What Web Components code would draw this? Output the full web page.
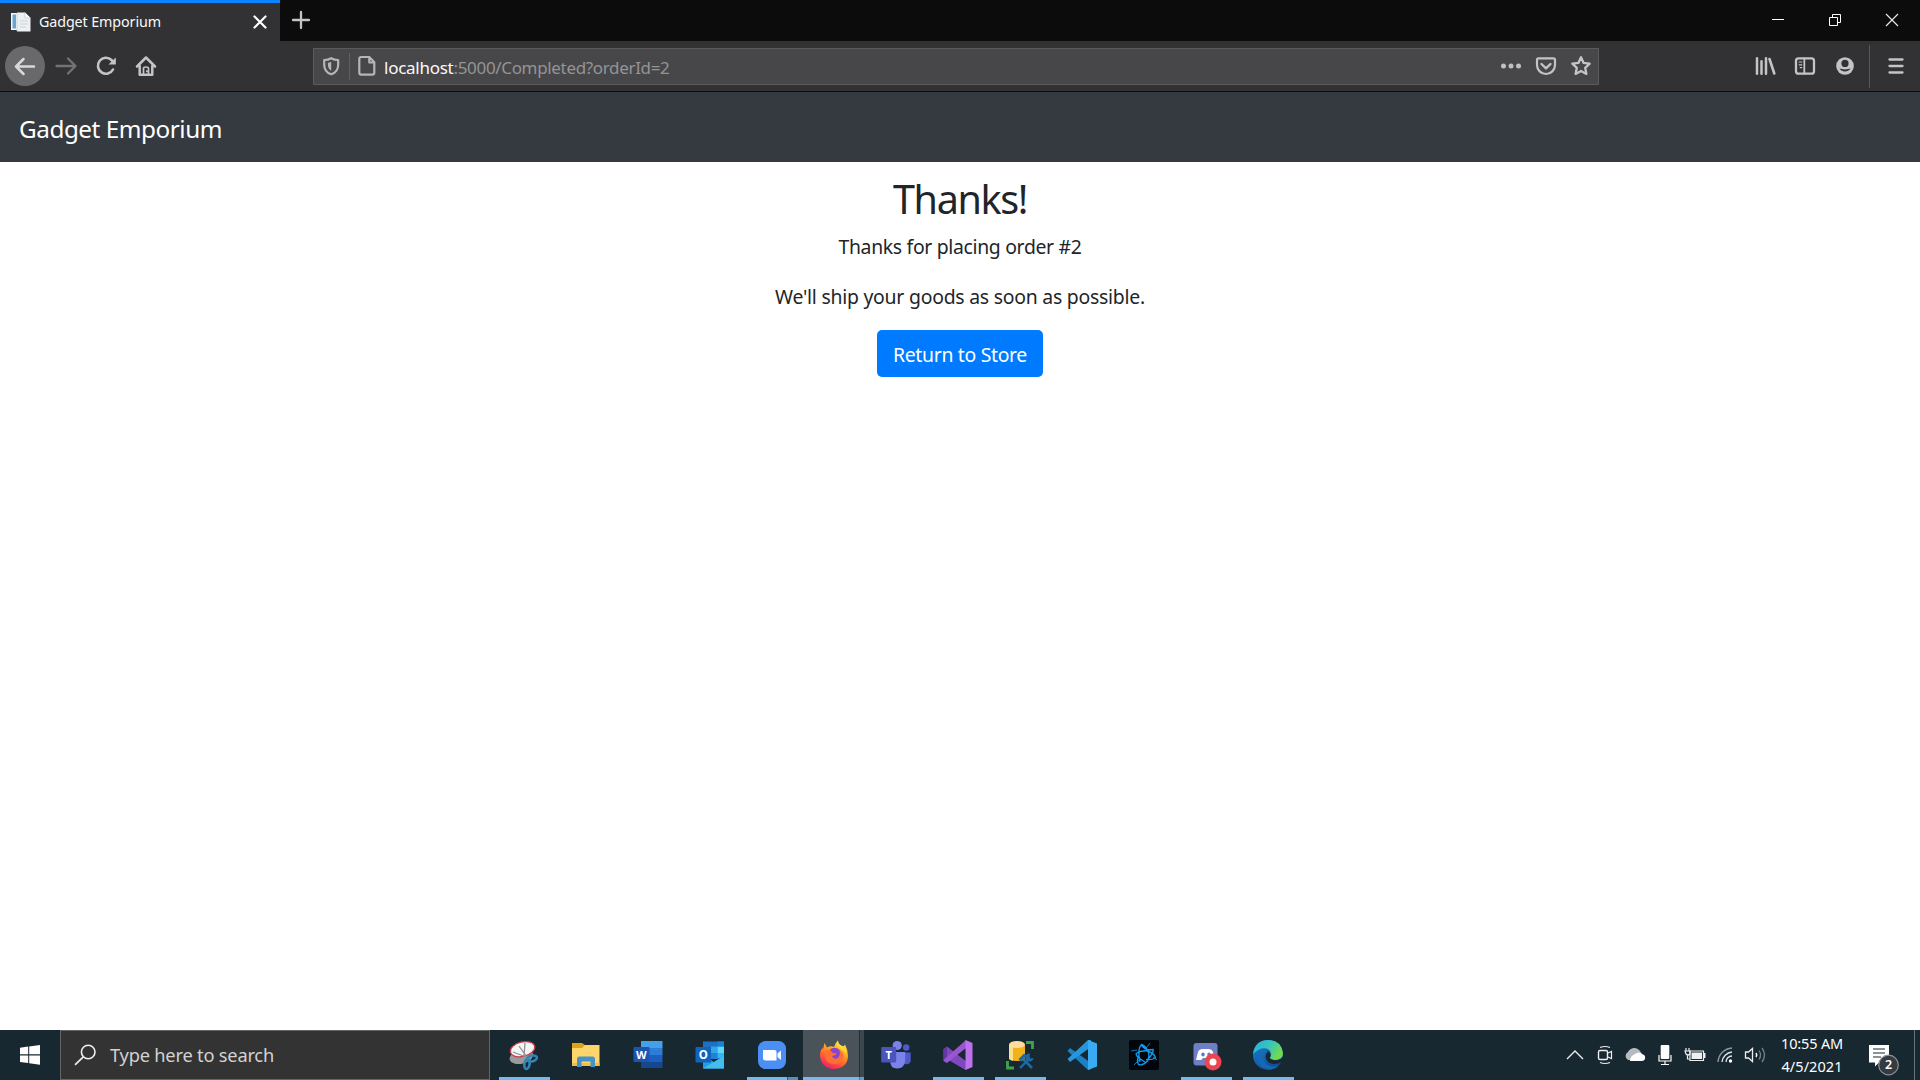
<!DOCTYPE html>
<html lang="en">
<head>
<meta charset="utf-8">
<title>Gadget Emporium</title>
<style>
html,body{margin:0;height:100%;overflow:hidden;background:#fff}
body{font-family:"Noto Sans","Open Sans",sans-serif}
</style>
</head>
<body>
<desktop-screen></desktop-screen>
<script>
const define = (name, css, html) => customElements.define(name, class extends HTMLElement {
  constructor() {
    super();
    this.attachShadow({mode: 'open'}).innerHTML = `<style>*{box-sizing:border-box}${css}</style>${html}`;
  }
});

/* Text run whose tracking is adjusted so that it spans the width in "w". */
customElements.define('fit-text', class extends HTMLElement {
  constructor() {
    super();
    this.attachShadow({mode: 'open'}).innerHTML =
      '<style>:host{display:inline-block;white-space:nowrap;flex:none}span{display:inline-block;white-space:pre}</style><span><slot></slot></span>';
  }
  connectedCallback() {
    const span = this.shadowRoot.querySelector('span');
    const slot = this.shadowRoot.querySelector('slot');
    const fit = () => {
      const w = +this.getAttribute('w');
      const n = slot.assignedNodes({flatten: true}).map(t => t.textContent).join('').length;
      if (!w || !n) return;
      span.style.letterSpacing = '0px';
      const natural = span.getBoundingClientRect().width;
      if (natural) span.style.letterSpacing = ((w - natural) / n) + 'px';
    };
    fit();
    slot.addEventListener('slotchange', fit);
    requestAnimationFrame(fit);
  }
});

/* Icons are drawn round the origin, one unit to the pixel. */
const line = (w, c = '#c4c4c5') => `fill="none" stroke="${c}" stroke-width="${w}" stroke-linecap="round" stroke-linejoin="round"`;
const ICONS = {
  favicon: `<path d="M-10-9H-1V8H-10Z" fill="#f4f8fb"/><path d="M-8.500-7.500H-5V6.500H-8.500Z" fill="#6aa5cf"/><path d="M-4-9.500H4L9.500-4V9.500H-4Z" fill="#edf1f4"/><path d="M4-9.500V-4H9.500" fill="#fff" stroke="#bcc5cb" stroke-width=".7"/><path d="M-4-9V9M-1-1H7M-1 2H7M-1 5H5" stroke="#c5ced4" stroke-width=".8"/>`,
  tabclose: `<path d="M-5.500-5.500L5.500 5.500M5.500-5.500L-5.500 5.500" ${line(2.2, '#fff')}/>`,
  plus: `<path d="M-8 0H8M0-8V8" ${line(2.3)}/>`,
  min: `<path d="M-6-.5H6" stroke="#fff"/>`,
  restore: `<path d="M-5.500-2.500H2.500V5.500H-5.500ZM-2.500-2.500V-5.500H5.500V2.500H2.500" fill="none" stroke="#fff"/>`,
  close: `<path d="M-6-6L6 6M6-6L-6 6" fill="none" stroke="#e8e8e8" stroke-width="1.2"/>`,
  back: `<circle r="20" fill="#69696b"/><path d="M9 .5H-8.500M-1.500-7L-9 .5L-1.500 8" ${line(2.5, '#d8d8d9')}/>`,
  forward: `<path d="M-9.500 0H9M2-7.500L9.500 0L2 7.500" ${line(2.3, '#737374')}/>`,
  reload: `<path d="M7 3.500A8 8 0 1 1 5.500-6L7-4" ${line(2.6)}/><path d="M9.800-8.500V-1.500H2.500Z" fill="#c4c4c5"/>`,
  home: `<path d="M-9 .5L0-8.500L9 .5M-6.300 0V8.800H6.300V0" ${line(2.5)}/><path d="M-2.500 8V2.500Q-2.500 1 0 1T2.500 2.500V8M.8 5V5.500" ${line(1.7)}/>`,
  shield: `<g transform="translate(-.8 0)"><path d="M0-7.800C-2.500-6.300-4.800-6-7-6V-1.500C-7 3.800-4 7 0 8.300C4 7 7 3.800 7-1.500V-6C4.800-6 2.500-6.300 0-7.800Z" ${line(2.2, '#b5b5b6')}/><path d="M0-4.200C-1.500-3.400-2.500-3.200-3.300-3.100V-1.500C-3.300 2-1.800 3.800 0 4.700Z" fill="#b5b5b6"/></g>`,
  page: `<path transform="translate(.8 0)" d="M-5.500-9H2.500L7.500-3.800V6.500Q7.500 8.700 5.500 8.700H-5.500Q-7.500 8.700-7.500 6.500V-7Q-7.500-9-5.500-9ZM2.500-8.500V-3.500H7" ${line(2.2, '#b5b5b6')}/>`,
  dots: `<g fill="#c0c0c1"><circle cx="-7.500" r="2.500"/><circle r="2.500"/><circle cx="7.500" r="2.500"/></g>`,
  pocket: `<path d="M-7.500-7.700H7.500Q9-7.700 9-6.200V-1A9 9 0 0 1-9-1V-6.200Q-9-7.700-7.500-7.700Z" ${line(2.2)}/><path d="M-4.500-2L0 2.300L4.500-2" ${line(2.4)}/>`,
  star: `<path d="M0-8.700L2.600-3.100L8.700-2.400L4.200 1.800L5.400 7.900L0 4.900L-5.400 7.900L-4.200 1.800L-8.700-2.400L-2.600-3.100Z" ${line(2.3)}/>`,
  library: `<path d="M-8-7.800V7.800M-3.500-4.800V7.800M1-7.800V7.800" ${line(2.5)} /><path d="M4.500-7L9.300 7.500" ${line(2.6)}/>`,
  sidebar: `<rect x="-9" y="-7.700" width="18" height="15.400" rx="2.500" ${line(2.3)}/><path d="M-.7-7.500V7.500" ${line(1.8)}/><path d="M-5.800-4H-3.200M-5.800-1.200H-3.200M-4.800 1.600H-3.200" ${line(1.2)}/>`,
  account: `<circle r="8.800" fill="#c4c4c5"/><circle cy="-2.600" r="3.600" fill="#323234"/><path d="M-5.500 2.300C-3.700 3.800 3.700 3.800 5.500 2.300C4 6.500-4 6.500-5.500 2.300Z" fill="#323234"/>`,
  menu: `<path d="M-6.500-6.500H6.500M-6.500 0H6.500M-6.500 6.500H6.500" ${line(2.3)}/>`,
  start: `<path d="M-10-7.200L-1.800-8.400V-.7H-10ZM-.8-8.500L10-10V-.7H-.8ZM-10 .4H-1.800V8.100L-10 6.900ZM-.8 .4H10V9.700L-.8 8.200Z" fill="#fff"/>`,
  search: `<circle cx="3.200" cy="-3" r="6.800" fill="none" stroke="#eee" stroke-width="1.600"/><path d="M-1.700 1.900L-10 9.800" stroke="#eee" stroke-width="1.700"/>`,
  snip: `<g transform="rotate(-14)"><ellipse cx="-3" cy="1" rx="12" ry="7" fill="#9a9a9d"/><ellipse cx="0" cy="-6" rx="12.500" ry="7.200" fill="#f5f5f5" stroke="#c73a49" stroke-width="1.300"/></g><path d="M-5-9L2 1M1-12L0 1M-11-3L2 2" stroke="#8c9094" stroke-width="1.300"/><g fill="none" stroke="#3286b5" stroke-width="2.600"><ellipse cx="8" cy="3.500" rx="5" ry="2.800" transform="rotate(-15 8 3.500)"/><ellipse cx="3" cy="9" rx="2.600" ry="5" transform="rotate(10 3 9)"/></g>`,
  folder: `<path d="M-14-12H-4L-1-10V-4H-14Z" fill="#dba318"/><path d="M-14-7H-4L-1-10H13.500V11H-14Z" fill="#fed56b"/><path d="M-14 8H13.500V11H-14Z" fill="#f5bd45"/><path d="M-9 12V4Q-9 1.500-6.500 1.500H6.500Q9 1.500 9 4V12H4.500V6.500H-4.500V12Z" fill="#4793c8"/>`,
  word: `<path d="M-7-14H14.500V-7H-7Z" fill="#459fe9"/><path d="M-7-7H14.500V0H-7Z" fill="#2d7dd8"/><path d="M-7 0H14.500V7H-7Z" fill="#1d5fbd"/><path d="M-7 7H14.500V13H-7Z" fill="#174791"/><rect x="-14.500" y="-8" width="16" height="15" rx="1" fill="#1c54b2"/><text x="-6.700" y="3.700" fill="#fff" font-size="11" font-weight="700" text-anchor="middle">W</text>`,
  outlook: `<path d="M-7-13.500H14V4H-7Z" fill="#1d70c4"/><path d="M1-8.500H7.500V-2H1Z" fill="#31a5e8"/><path d="M7.500-8.500H14V-2H7.500Z" fill="#60d6fa"/><path d="M7.500-13.500H14V-8.500H7.500Z" fill="#1684d8"/><path d="M1-2H7.500V4H1Z" fill="#1d83d2"/><path d="M7.500-2H14V3H7.500Z" fill="#34b5ee"/><path d="M-7 0L4 7L14 1V13.500H-7Z" fill="#289ce2"/><path d="M-7 13.500L14 1V13.500Z" fill="#43bdee"/><rect x="-14.500" y="-8" width="15.500" height="15.500" rx="1" fill="#0f65bd"/><text x="-6.800" y="3.800" fill="#fff" font-size="11.500" font-weight="700" text-anchor="middle">O</text>`,
  zoom: `<rect x="-14" y="-14" width="28" height="28" rx="7.500" fill="#4b8ff4"/><path d="M-9-5H2.500Q4.500-5 4.500-3V5.500H-6.500Q-9 5.500-9 3Z" fill="#fff"/><path d="M5.500-1.500L9-4.500V5L5.500 2Z" fill="#fff"/>`,
  firefox: `<defs><linearGradient id="ff" x1=".8" y1="0" x2=".3" y2="1"><stop offset="0" stop-color="#fff04b"/><stop offset=".35" stop-color="#ffac24"/><stop offset=".65" stop-color="#ff642e"/><stop offset="1" stop-color="#f01873"/></linearGradient></defs><path d="M-9.500-12L-7-7.500Q-3-9.500 0-8Q1-12 4-14.500Q4-11 8-9Q10-8 11-10.500Q14-5 14 1C14 9 8 14 0 14S-14.500 8-14-1Q-13.800-4-11.500-7.500L-11-5.500Z" fill="url(#ff)"/><circle cx=".5" cy="-.5" r="6.800" fill="#8b45cc"/><path d="M-9-4Q-6-5.500-3.500-5Q-3-3-1-2L3-1.500Q1 .5-2 1Q-1 4.500 3 3.500Q7 1 5.500-5Q10-3 9 2Q8 9 0 9T-9 1Z" fill="#ff7030"/><path d="M4-14.500Q4-11 8-9Q12-7 12.500-1Q10-6 5-7Q1-9 4-14.500Z" fill="#ffd83d"/>`,
  teams: `<g transform="translate(-.8 0)"><circle cx="11" cy="-7.500" r="3.200" fill="#5059c9"/><circle cx="2" cy="-9.500" r="4.600" fill="#7b83eb"/><path d="M8-2.500H15.500V6Q14.500 10 9 9Z" fill="#5059c9"/><path d="M-5-3H10V6Q9 13.500 2 13.500T-5 6Z" fill="#7b83eb"/><rect x="-14" y="-8" width="15" height="15.500" rx="1" fill="#4b53bc"/><text x="-6.500" y="4" fill="#fff" font-size="11" font-weight="700" text-anchor="middle">T</text></g>`,
  vs: `<path d="M-14.500-6L-11-8.500L9 7V13.500L7.500 15L-12 3.500V3L-14.500 5Z" fill="#7f48bd"/><path d="M-14.500-6L-11-8V7.500L-14.500 5Z" fill="#6338a0"/><path d="M-14.500 5V6L-11 8L8-7V-15Z" fill="#9a55d5"/><path d="M7.500-15L14.500-12V12L7.500 15Z" fill="#bd72eb"/>`,
  db: `<path d="M6-12.500H12.500V-6M-12.500 6V13H-6" fill="none" stroke="#3fa34b" stroke-width="2.800"/><path d="M-11-10V3Q-11 6-3 6T5 3V-10Z" fill="#f3b21c"/><path d="M-11-10V3Q-11 5-7 5.700V-9Z" fill="#fde08a"/><ellipse cx="-3" cy="-10.500" rx="8" ry="3.500" fill="#ffdca0"/><path d="M3.500 4.500L12 13" stroke="#1c69a8" stroke-width="2.600"/><path d="M-1.500 4L4-1.500L7 .5L2.500 5L1.500 7Z" fill="#1c69a8"/><path d="M0 13L9 4" stroke="#1c69a8" stroke-width="2.400"/><path d="M10-1.500A4 4 0 1 0 13.500 3L10.500 3.500L9.500 1.800Z" fill="#1c69a8"/>`,
  vscode: `<path d="M-14.500-4L-12-7L9 8V14L6 15Z" fill="#1c80c4"/><path d="M-14.500 4L-12 7L9-8V-15H6Z" fill="#2796dc"/><path d="M6-15L15-11.500V11.500L6 15Z" fill="#38abf2"/>`,
  bnet: `<rect x="-15" y="-15" width="30" height="30" rx="2" fill="#020509"/><g fill="none" stroke="#1499e8" stroke-width="1.400"><path d="M-4 7Q-7-6-2.500-10.500Q2-9 4-3M-8-1.500Q-3-5 4-4Q11-1 11.500 3Q8 5 2 4.500M4-4Q6 1 3.500 6Q-1 11-5.500 9.500Q-7.500 6-5.500 1M-8-1.500Q-8 2 1 7M-2.500-10.500Q0-4 9-5.500Q10-3 5 3"/><path d="M-13-4L-7-5M9 2L13 5M-10 10L-4 4M6-12L2-7" stroke-width=".8"/></g>`,
  discord: `<g transform="translate(2 0)"><rect x="-14.500" y="-12" width="24" height="22.500" rx="3" fill="#6f7fc4"/><path d="M-10-3Q-9-6-5-6H0Q4-6 5-3L7 5H2L0 3H-5L-7 5H-12Z" fill="#fff"/><g fill="#6573b9"><ellipse cx="-5" cy="-.5" rx="1.700" ry="2"/><ellipse cx="1" cy="-.5" rx="1.700" ry="2"/></g><circle cx="5" cy="7" r="8.500" fill="#ec4550"/><circle cx="5" cy="7" r="3.500" fill="#fff"/></g>`,
  edge: `<defs><linearGradient id="eg" x2="1" y2=".5"><stop stop-color="#27aee5"/><stop offset=".55" stop-color="#38c5ba"/><stop offset="1" stop-color="#72db4c"/></linearGradient><linearGradient id="eb" y2="1" x2=".6"><stop stop-color="#1685d8"/><stop offset="1" stop-color="#104b96"/></linearGradient></defs><circle r="15" fill="url(#eb)"/><path d="M-15-1Q-13-15 0-15Q13-15 15-2Q15 5 7 5Q3 5 2 3Q5-3 0-6Q-7-9-15-1Z" fill="url(#eg)"/><path d="M-3-3C-8 7 1 15 11 10C7 16-4 16-9 9S-9-5-3-3Z" fill="#1769b3"/><path d="M0-4Q-5 2 0 7Q5 11 14 7Q17 3 14.800 2Q12 6 6 5Q1 4 2 2Q4-1 0-4Z" fill="#182831"/>`,
  chevron: `<path d="M-8 4L0-4L8 4" fill="none" stroke="#eee" stroke-width="1.400"/>`,
  camera: `<rect x="-6.500" y="-4.500" width="9" height="9" rx="1.500" fill="none" stroke="#eee" stroke-width="1.400"/><path d="M3-2L6.500-3.500V3.500L3 2M-5-7.500Q0-9.500 5-7.500M-5 7.500Q0 9.500 5 7.500" fill="none" stroke="#eee" stroke-width="1.200"/>`,
  cloud: `<path d="M-7 5A4.500 4.500 0 0 1-7-3A7 7 0 0 1 5-4L7-1L0 5Z" fill="#b5bbbe"/><path d="M-5 6Q-5 1 0-1Q4-4 7-1Q11 0 10 4Q9 6 7 6Z" fill="#fff"/>`,
  mic: `<rect x="-4.300" y="-10" width="8.600" height="14" rx="1" fill="#fff"/><path d="M-6 0V6H6V0M0 6V9M-4 9.500H4" fill="none" stroke="#fff" stroke-width="1.200"/>`,
  battery: `<path d="M-5-4H8.500V5.500H-5Z" fill="none" stroke="#eee" stroke-width="1.200"/><path d="M-3.500-2.500H7V4H-3.500ZM9-2H10.500V3H9Z" fill="#eee"/><path d="M-9-7V-4M-6-7V-4M-10-4H-5V-1Q-7 1-9-1ZM-7.500 0V4H-5" fill="none" stroke="#eee" stroke-width="1.200"/>`,
  wifi: `<g fill="none" stroke="#dfe3e5" stroke-width="1.400"><path d="M-7 7A15 15 0 0 1 7-7" stroke="#8d989e"/><path d="M-3 7A11 11 0 0 1 7-3M1 7A6 6 0 0 1 7 1"/></g><circle cx="5.500" cy="6" r="1.700" fill="#fff"/>`,
  volume: `<path d="M-9.500-3H-6.500L-2.500-6.500V6.500L-6.500 3H-9.500Z" fill="none" stroke="#eee" stroke-width="1.300"/><path d="M1-2Q2.500 0 1 2" fill="none" stroke="#fff" stroke-width="1.500"/><path d="M4-4.500Q7 0 4 4.500M7-7Q12 0 7 7" fill="none" stroke="#73838b" stroke-width="1.300"/>`,
  note: `<g transform="translate(1 0)"><path d="M-15-10H5V7.500H-5L-9 11.500V7.500H-15Z" fill="#fff"/><path d="M-11-6H1M-11-2H1M-11 2H-3" stroke="#182831" stroke-width="1.200"/><circle cx="4.500" cy="10" r="9.800" fill="#353b3f" stroke="#8d9498" stroke-width="1.200"/><text x="4.500" y="14.300" fill="#fff" font-size="12.500" font-weight="600" text-anchor="middle">2</text></g>`
};

customElements.define('ui-icon', class extends HTMLElement {
  constructor() { super(); this.attachShadow({mode: 'open'}); }
  connectedCallback() {
    this.shadowRoot.innerHTML = `<style>:host{display:flex;align-items:center;justify-content:center;flex:none;width:40px;height:40px}svg{display:block;overflow:visible;flex:none;font-family:"Noto Sans",sans-serif}</style>
      <svg width="40" height="40" viewBox="-20 -20 40 40" aria-hidden="true">${ICONS[this.getAttribute('name')] || ''}</svg>`;
  }
});

define('browser-tab', `
  :host{display:flex;align-items:center;width:280px;height:41px;background:#323234;border-top:3px solid #0a84ff;color:#f9f9fa;font-size:14.3px;line-height:38px}
  .fav{width:20px;margin:0 8px 0 11px}
  .x{width:20px;margin-left:auto;margin-right:10.500px;height:38px}
  fit-text{height:37px;line-height:37px;align-self:flex-start}`,
  `<ui-icon class="fav" name="favicon"></ui-icon><fit-text w="122"><slot></slot></fit-text><ui-icon class="x" name="tabclose"></ui-icon>`);

define('tab-strip', `
  :host{display:flex;height:41px;background:#0c0c0d;align-items:flex-start}
  .new{width:42px}
  .controls{display:flex;margin-left:auto;height:40px}
  .controls ui-icon{width:57px}
  .controls ui-icon:last-child{width:57px}`,
  `<browser-tab>Gadget Emporium</browser-tab><ui-icon class="new" name="plus"></ui-icon>
   <div class="controls"><ui-icon name="min"></ui-icon><ui-icon name="restore"></ui-icon><ui-icon name="close"></ui-icon></div>`);

define('address-bar', `
  :host{display:flex;align-items:center;width:1286px;height:37px;background:#474749;border:1px solid #5a5a5c;font-size:17px;color:#949495;flex:none}
  ui-icon{width:35px;height:35px}
  .page{width:32px;margin-right:2px}
  i{width:1px;height:27px;background:#606062}
  .url{display:flex;line-height:35px;padding-top:2px;margin-right:auto}
  .host{color:#f9f9fa}`,
  `<ui-icon name="shield"></ui-icon><i></i><ui-icon class="page" name="page"></ui-icon>
   <div class="url"><fit-text class="host" w="69.5">localhost</fit-text><fit-text w="216">:5000/Completed?orderId=2</fit-text></div>
   <ui-icon name="dots"></ui-icon><ui-icon name="pocket"></ui-icon><ui-icon name="star"></ui-icon>`);

define('browser-toolbar', `
  :host{display:flex;align-items:center;height:51px;background:#323234;border-bottom:1px solid #0c0c0d;padding:0 4px 0 5px}
  .fwd{margin-left:1px}
  address-bar{margin-left:147px}
  .lib{margin-left:auto}
  i{width:1px;height:43px;background:#58585a;margin:0 6px 0 4px}`,
  `<ui-icon name="back"></ui-icon><ui-icon class="fwd" name="forward"></ui-icon><ui-icon name="reload"></ui-icon><ui-icon name="home"></ui-icon>
   <address-bar></address-bar>
   <ui-icon class="lib" name="library"></ui-icon><ui-icon name="sidebar"></ui-icon><ui-icon name="account"></ui-icon><i></i><ui-icon name="menu"></ui-icon>`);

define('store-navbar', `
  :host{display:flex;align-items:center;height:70px;padding:3px 0 0 19px;background:#343a40;color:#fff;font-size:24.300px;line-height:38px}`,
  `<fit-text w="203"><slot></slot></fit-text>`);

define('store-button', `
  :host{display:flex;align-items:center;justify-content:center;width:166px;height:47px;border-radius:5px;background:#007bff;color:#fff;font-size:19.400px;line-height:30px;padding-top:3px}`,
  `<fit-text w="134"><slot></slot></fit-text>`);

define('order-completed', `
  :host{display:flex;flex-direction:column;align-items:center;flex:1;background:#fff;color:#212529;padding-top:13px;font-size:19.400px;line-height:30px}
  h1,p{margin:0;font-weight:400}
  h1{height:48px;font-size:39.500px;line-height:48px;margin-bottom:9px}
  p{height:30px;margin-bottom:20px}
  p+p{margin-bottom:18px}
  fit-text{display:block}`,
  `<h1><fit-text w="134">Thanks!</fit-text></h1>
   <p><fit-text w="243">Thanks for placing order #2</fit-text></p>
   <p><fit-text w="370">We'll ship your goods as soon as possible.</fit-text></p>
   <store-button>Return to Store</store-button>`);

define('task-item', `
  :host{display:flex;flex-direction:column;align-items:center;width:62px;height:50px;flex:none}
  .bar{width:51px;height:3px;display:flex}
  :host([running]) .bar{background:#76b9ed}
  :host([stacked]) .bar{background:linear-gradient(90deg,#76b9ed 40px,#37566c 40px,#37566c 41px,#5790b9 41px)}
  :host([active]){background:linear-gradient(90deg,#4a5359 56px,#232e35 56px,#232e35 57px,#3c484f 57px);width:61px;margin-right:1px}
  :host([active]) .bar{width:61px;background:linear-gradient(90deg,#76b9ed 56px,#4c7999 56px,#4c7999 57px,#659fc9 57px)}`,
  `<slot></slot><div class="bar"></div>`);
/* A task item takes its icon by name. */
customElements.define('task-app', class extends HTMLElement {
  constructor() { super(); this.attachShadow({mode: 'open'}); }
  connectedCallback() {
    const s = this.getAttribute('state') || '';
    this.shadowRoot.innerHTML = `<style>:host{display:block;flex:none}ui-icon{width:60px;height:47px;padding-top:3px;box-sizing:border-box}</style>
      <task-item ${s}><ui-icon name="${this.getAttribute('name')}"></ui-icon></task-item>`;
  }
});

define('search-box', `
  :host{display:flex;align-items:center;width:430px;height:50px;background:#333334;border:1px solid #626667;color:#d2d2d2;font-size:18.300px;line-height:48px}
  ui-icon{width:24px;margin:0 13px 0 12px}`,
  `<ui-icon name="search"></ui-icon><fit-text w="164"><slot></slot></fit-text>`);

define('system-tray', `
  :host{display:flex;align-items:center;margin-left:auto;height:50px;color:#fff}
  ui-icon{width:30px}
  .clock{display:flex;flex-direction:column;align-items:center;width:83px;font-size:14.500px;line-height:23px;padding:0 0 1px 1px}
  .clock fit-text{height:23px}
  .note{width:61px;padding-right:1px}
  i{width:1px;height:50px;background:#69757c;margin-right:5px}`,
  `<ui-icon name="chevron"></ui-icon><ui-icon name="camera"></ui-icon><ui-icon name="cloud"></ui-icon><ui-icon name="mic"></ui-icon><ui-icon name="battery"></ui-icon><ui-icon name="wifi"></ui-icon><ui-icon name="volume"></ui-icon>
   <div class="clock"><fit-text w="62">10:55 AM</fit-text><fit-text w="61">4/5/2021</fit-text></div>
   <ui-icon class="note" name="note"></ui-icon><i></i>`);

define('task-bar', `
  :host{display:flex;height:50px;background:#182831;flex:none}
  .start{width:60px;height:50px}
  .apps{display:flex;margin-left:3px}`,
  `<ui-icon class="start" name="start"></ui-icon><search-box>Type here to search</search-box>
   <div class="apps">
    <task-app name="snip" state="running"></task-app><task-app name="folder"></task-app><task-app name="word"></task-app><task-app name="outlook"></task-app>
    <task-app name="zoom" state="stacked"></task-app><task-app name="firefox" state="active"></task-app><task-app name="teams"></task-app><task-app name="vs" state="running"></task-app>
    <task-app name="db" state="running"></task-app><task-app name="vscode"></task-app><task-app name="bnet"></task-app><task-app name="discord" state="running"></task-app><task-app name="edge" state="running"></task-app>
   </div><system-tray></system-tray>`);

define('desktop-screen', `:host{display:flex;flex-direction:column;width:1920px;height:1080px;overflow:hidden;background:#fff}`,
  `<tab-strip></tab-strip><browser-toolbar></browser-toolbar><store-navbar>Gadget Emporium</store-navbar><order-completed></order-completed><task-bar></task-bar>`);
</script>
</body>
</html>
